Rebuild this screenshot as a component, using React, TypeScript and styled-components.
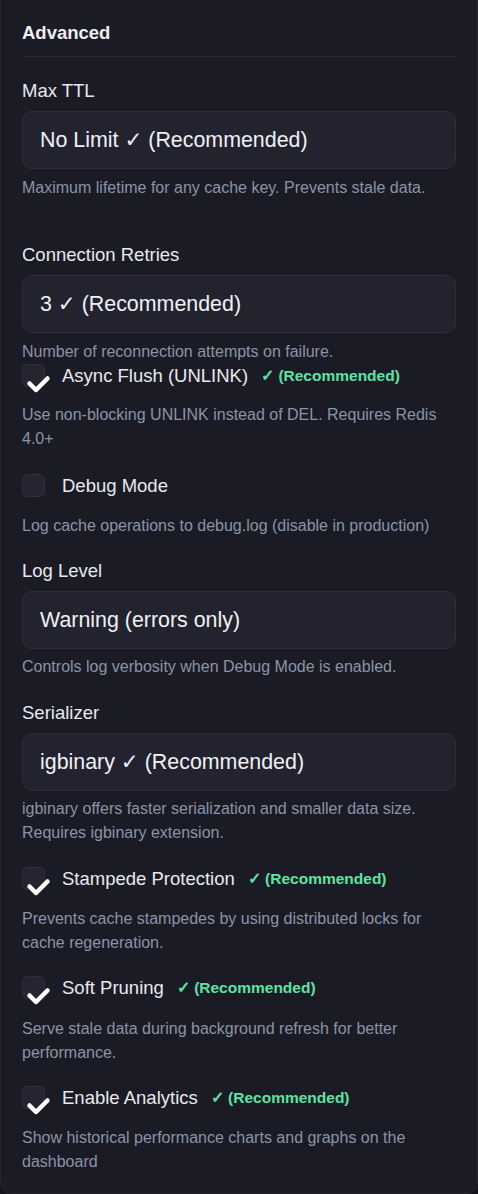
import * as React from 'react'
import styled, { createGlobalStyle } from 'styled-components'

const GlobalStyle = createGlobalStyle`
  html, body {
    margin: 0;
    padding: 0;
    background: #14141b;
  }
  body {
    font-family: "Liberation Sans", Arial, sans-serif;
    -webkit-font-smoothing: antialiased;
  }
`

const Card = styled.section`
  box-sizing: border-box;
  width: 478px;
  background: #1b1b25;
  border: 1px solid #262631;
  border-top: none;
  border-radius: 0 0 12px 12px;
  padding: 21px 21px 19px;
`

const Heading = styled.h3`
  margin: 0;
  font-size: 18.5px;
  line-height: 24px;
  font-weight: 700;
  color: #eeeef2;
`

const Divider = styled.hr`
  margin: 11px 0 22px;
  border: none;
  height: 1px;
  background: #2a2a37;
`

const Field = styled.div<{ $before?: number, $after: number }>`
  display: flex;
  flex-direction: column;
  margin-top: ${p => p.$before ?? 0}px;
  margin-bottom: ${p => p.$after}px;
`

const Label = styled.label`
  font-size: 18.5px;
  line-height: 24px;
  color: #e8e8ee;
`

const Select = styled.select`
  appearance: none;
  -webkit-appearance: none;
  box-sizing: border-box;
  margin-top: 8px;
  height: 58px;
  width: 100%;
  padding: 0 17px;
  background: #232330;
  border: 1px solid #2d2d3b;
  border-radius: 10px;
  color: #f0f0f4;
  font-family: "Liberation Sans", Arial, "DejaVu Sans", sans-serif;
  font-size: 21.4px;
  outline: none;
`

const Help = styled.p<{ $top?: number }>`
  margin: ${p => p.$top ?? 5}px 0 0;
  font-size: 16px;
  line-height: 24px;
  color: #8a94a8;
`

const CheckRow = styled.label<{ $top: number }>`
  display: flex;
  align-items: center;
  gap: 17px;
  margin-top: ${p => p.$top}px;
  height: 23px;
  cursor: pointer;
`

const Box = styled.span`
  position: relative;
  flex: none;
  box-sizing: border-box;
  width: 23px;
  height: 23px;
  border-radius: 5px;
  background: #252531;
  border: 1px solid #2f2f3d;
`

const Tick = styled.svg`
  position: absolute;
  left: 4px;
  top: 11px;
  width: 24px;
  height: 17px;
  overflow: visible;
`

const CheckText = styled.span`
  font-size: 18.5px;
  line-height: 24px;
  color: #e8e8ee;
`

const Badge = styled.span`
  margin-left: -4px;
  font-size: 15.5px;
  font-weight: 700;
  color: #5ee3a2;
`

const Toggle = ({ checked, label, top, recommended }: { checked: boolean, label: string, top: number, recommended?: boolean }) => (
  <CheckRow $top={top}>
    <Box>
      {checked && (
        <Tick viewBox="0 0 24 17">
          <path d="M2.5 7.5 L9 14 L20.5 2.5" fill="none" stroke="#ffffff" strokeWidth="4.5" strokeLinecap="round" strokeLinejoin="round" />
        </Tick>
      )}
    </Box>
    <CheckText>{label}</CheckText>
    {recommended && <Badge>✓ (Recommended)</Badge>}
  </CheckRow>
)

export default function App() {
  return (
    <>
      <GlobalStyle />
      <Card>
        <Heading>Advanced</Heading>
        <Divider />

        <Field $after={43}>
          <Label>Max TTL</Label>
          <Select defaultValue="0">
            <option value="0">No Limit ✓ (Recommended)</option>
          </Select>
          <Help $top={7}>Maximum lifetime for any cache key. Prevents stale data.</Help>
        </Field>

        <Field $after={0}>
          <Label>Connection Retries</Label>
          <Select defaultValue="3">
            <option value="3">3 ✓ (Recommended)</option>
          </Select>
          <Help $top={7}>Number of reconnection attempts on failure.</Help>
        </Field>

        <Toggle checked label="Async Flush (UNLINK)" top={0} recommended />
        <Help $top={16}>Use non-blocking UNLINK instead of DEL. Requires Redis 4.0+</Help>

        <Toggle checked={false} label="Debug Mode" top={23} />
        <Help $top={17}>Log cache operations to debug.log (disable in production)</Help>

        <Field $before={21} $after={22}>
          <Label>Log Level</Label>
          <Select defaultValue="warning">
            <option value="warning">Warning (errors only)</option>
          </Select>
          <Help $top={6}>Controls log verbosity when Debug Mode is enabled.</Help>
        </Field>

        <Field $after={0}>
          <Label>Serializer</Label>
          <Select defaultValue="igbinary">
            <option value="igbinary">igbinary ✓ (Recommended)</option>
          </Select>
          <Help $top={6}>igbinary offers faster serialization and smaller data size. Requires igbinary extension.</Help>
        </Field>

        <Toggle checked label="Stampede Protection" top={22} recommended />
        <Help $top={17}>Prevents cache stampedes by using distributed locks for cache regeneration.</Help>

        <Toggle checked label="Soft Pruning" top={21} recommended />
        <Help $top={18}>Serve stale data during background refresh for better performance.</Help>

        <Toggle checked label="Enable Analytics" top={21} recommended />
        <Help $top={17}>Show historical performance charts and graphs on the dashboard</Help>
      </Card>
    </>
  )
}
